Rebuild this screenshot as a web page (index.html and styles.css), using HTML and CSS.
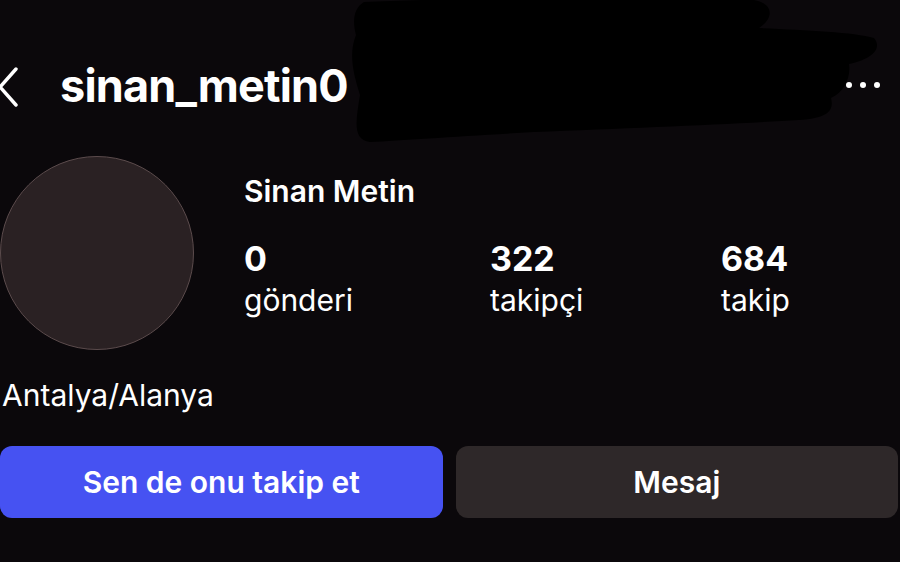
FILE: index.html
```html
<!DOCTYPE html>
<html lang="tr">

<head>
	<meta charset="UTF-8">
	<title>sinan_metin0</title>

	<link rel="stylesheet" href="styles.css">
</head>

<body>
	<header class="top-bar">
		<svg class="back" width="22" height="42" viewBox="0 0 22 42">
			<path d="M18 3 L2 21 L18 39" fill="none" stroke="#fff" stroke-width="3.4" stroke-linecap="round" stroke-linejoin="round" />
		</svg>
		<h1 class="username">sinan_metin0</h1>
		<div class="more">
			<span></span><span></span><span></span>
		</div>
		<!-- karalama: kullanıcı adının devamını kapatan siyah leke -->
		<svg class="scribble" width="580" height="150" viewBox="0 0 580 150">
			<path d="M30 2 C120 -2 300 -4 420 0 C440 4 440 18 425 28 C470 30 520 32 540 38 C547 46 543 58 515 64 C517 78 510 92 497 98 C500 110 495 118 465 120 C400 124 300 128 200 132 C130 136 70 140 36 142 C18 140 22 120 26 95 C20 75 14 55 22 35 C18 20 20 8 30 2 Z" fill="#000" />
		</svg>
	</header>

	<section class="profile">
		<div class="avatar"></div>
		<div class="info">
			<h2 class="full-name">Sinan Metin</h2>
			<ul class="stats">
				<li><strong>0</strong><span>gönderi</span></li>
				<li><strong>322</strong><span>takipçi</span></li>
				<li><strong>684</strong><span>takip</span></li>
			</ul>
		</div>
	</section>

	<p class="bio">Antalya/Alanya</p>

	<div class="actions">
		<button class="btn btn-follow">Sen de onu takip et</button>
		<button class="btn btn-message">Mesaj</button>
	</div>
</body>

</html>
```

FILE: styles.css
```css
html {
	font-family: Inter, "Liberation Sans", sans-serif;
	color: #fff;
	background-color: #0b080b;
}

body {
	margin: 0;
	height: 562px;
	overflow: hidden;
}

/* barra superior */
.top-bar {
	position: relative;
	display: flex;
	align-items: center;
	height: 170px;
	margin-bottom: -14px;
}

.top-bar .back {
	margin-top: 4px;
	margin-left: -2px;
}

.username {
	margin: 0 0 0 40px;
	font-size: 45px;
	font-weight: 700;
	letter-spacing: -0.8px;
}

.more {
	display: flex;
	gap: 8px;
	margin-left: auto;
	margin-right: 20px;
	position: relative;
	z-index: 1;
}

.more span {
	width: 6px;
	height: 6px;
	border-radius: 50%;
	background-color: #fff;
}

.scribble {
	position: absolute;
	top: 0;
	left: 334px;
}

/* perfil */
.profile {
	display: flex;
	align-items: flex-start;
	margin-top: -14px;
}

.avatar {
	flex: none;
	width: 192px;
	height: 192px;
	border-radius: 50%;
	background-color: #2a2123;
	border: 1px solid #5b4b4c;
}

.info {
	margin-left: 50px;
	padding-top: 17px;
}

.full-name {
	margin: 0;
	font-size: 30px;
	font-weight: 600;
}

.stats {
	display: grid;
	grid-template-columns: 246px 231px auto;
	list-style: none;
	margin: 31px 0 0 0;
	padding: 0;
}

.stats li {
	display: flex;
	flex-direction: column;
}

.stats strong {
	font-size: 34px;
	font-weight: 700;
	line-height: 38px;
}

.stats span {
	font-size: 30px;
	line-height: 44px;
}

.bio {
	margin: 27px 0 0 2px;
	font-size: 30px;
}

/* botones */
.actions {
	display: flex;
	gap: 13px;
	margin-top: 33px;
	padding-right: 2px;
}

.btn {
	flex: 1;
	height: 72px;
	border: none;
	border-radius: 12px;
	font-family: inherit;
	font-size: 30px;
	font-weight: 600;
	color: #fff;
}

.btn-follow {
	background-color: #4652f2;
}

.btn-message {
	background-color: #2e2829;
}
```
